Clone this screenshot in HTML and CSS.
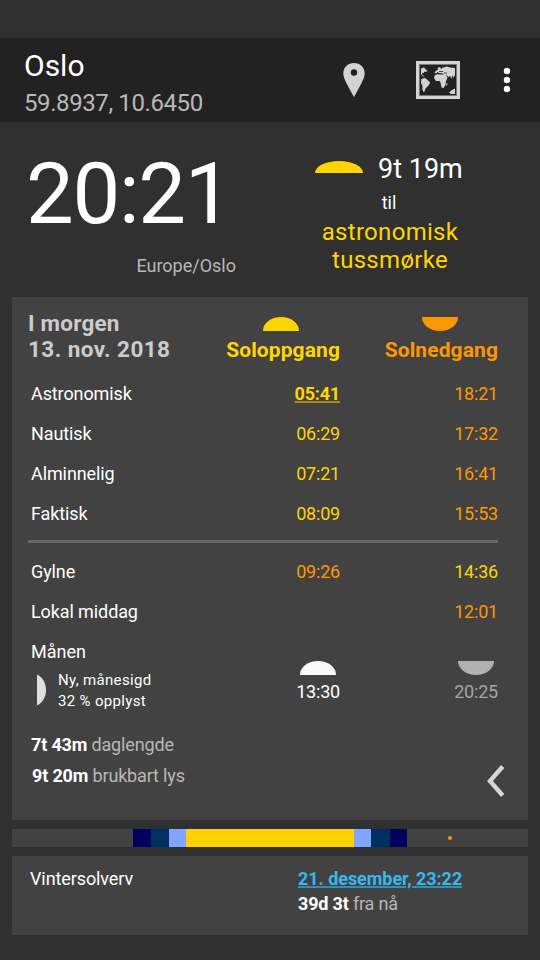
FILE: index.html
```html
<!DOCTYPE html>
<html lang="nb">
<head>
<meta charset="utf-8">
<title>Oslo</title>
<link rel="stylesheet" href="styles.css">
</head>
<body>
<header class="bar">
  <div class="place">
    <div class="city">Oslo</div>
    <div class="coords">59.8937, 10.6450</div>
  </div>
  <svg class="pin" width="22" height="34" viewBox="0 0 22 34"><path fill="#d3d3d3" fill-rule="evenodd" d="M11 0C4.8 0 .3 4.600.3 10.500.3 15 3.800 21 11 34 18.200 21 21.700 15 21.700 10.500 21.700 4.600 17.200 0 11 0ZM11 6.300a3.200 3.200 0 1 1 0 6.400 3.200 3.200 0 0 1 0-6.400Z"/></svg>
  <svg class="map" width="44" height="38" viewBox="0 0 44 38">
    <rect x="1.500" y="1.500" width="41" height="35" fill="none" stroke="#d3d3d3" stroke-width="3"/>
    <rect x="3.500" y="3.500" width="37" height="31" fill="none" stroke="#777" stroke-width="1"/>
    <g fill="#d3d3d3">
      <path d="M5 7.500L6.500 7 8 6.300 9.300 8 11.500 10 10 11 8.500 10.600 7.500 12 6 12.300 6.300 14 8.500 15.500 8 16 5 13.500Z"/>
      <path d="M5.300 18L9 17 11 18.500 14 21.300 13.300 23.500 11.500 25.500 9.500 27.500 8.500 30.500 7.300 31 6.300 28 6.500 25 5 22Z"/>
      <path d="M18.500 12L20 9.500 22 9 21.500 7 24 6 25 8 27 6.500 31 5.500 34 6.500 39 7 39 16 38 14 37.500 17 36 14.500 35.500 18 34 15 32.500 16 31 14.500 29.500 14 31.500 16 31 18 30 20 29.500 24 27.500 27 25.500 26.500 24.500 21.500 23.500 20 20 20 18 17 18.500 14.500 21 13.200 24 13.500 28 13.500 27 12.500 23 12 21.500 11 20 12.600Z"/>
      <path d="M30.500 22.500L31.500 22 31.300 24 30.300 25Z"/>
      <path d="M33 31.500L36 29 39 27.500V33H35Z"/>
    </g>
    <path fill="none" stroke="#222" stroke-width=".8" d="M23 10.500h4M28 12h3"/>
  </svg>
  <svg class="more" width="8" height="26" viewBox="0 0 8 26" fill="#fff"><circle cx="4" cy="4" r="3.200"/><circle cx="4" cy="13" r="3.200"/><circle cx="4" cy="22" r="3.200"/></svg>
</header>

<section class="now">
  <div class="clock">
    <div class="time">20:21</div>
    <div class="zone">Europe/Oslo</div>
  </div>
  <div class="next">
    <div class="countdown">
      <svg width="48" height="12" viewBox="0 0 48 12"><ellipse cx="24" cy="12" rx="24" ry="12" fill="#ffd500"/></svg>
      <span class="remaining">9t 19m</span>
    </div>
    <div class="until">til</div>
    <div class="event">astronomisk<br>tussmørke</div>
  </div>
</section>

<main class="card day">
  <div class="head">
    <div class="date">I morgen<br><span class="day-date">13. nov. 2018</span></div>
    <div class="col rise"><svg width="36" height="14" viewBox="0 0 36 14"><ellipse cx="18" cy="14" rx="18" ry="14" fill="#ffd500"/></svg><span>Soloppgang</span></div>
    <div class="col set"><svg width="36" height="14" viewBox="0 0 36 14"><ellipse cx="18" cy="0" rx="18" ry="14" fill="#ff9800"/></svg><span>Solnedgang</span></div>
  </div>
  <div class="row"><span>Astronomisk</span><b class="yellow current">05:41</b><span class="orange">18:21</span></div>
  <div class="row"><span>Nautisk</span><span class="yellow">06:29</span><span class="orange">17:32</span></div>
  <div class="row"><span>Alminnelig</span><span class="yellow">07:21</span><span class="orange">16:41</span></div>
  <div class="row"><span>Faktisk</span><span class="yellow">08:09</span><span class="orange">15:53</span></div>
  <div class="rule"></div>
  <div class="row"><span>Gylne</span><span class="orange">09:26</span><span class="yellow">14:36</span></div>
  <div class="row"><span>Lokal middag</span><span></span><span class="orange">12:01</span></div>
  <div class="moon">
    <div>
      <div class="moon-name">Månen</div>
      <div class="phase">
        <svg width="9" height="32" viewBox="0 0 9 32"><path fill="#dedede" d="M0 0.500C12 6.500 12 25.500 0 31.500Z"/></svg>
        <div class="phase-text">Ny, månesigd<br>32 % opplyst</div>
      </div>
    </div>
    <div class="moon-time"><svg width="36" height="14" viewBox="0 0 36 14"><ellipse cx="18" cy="14" rx="18" ry="14" fill="#fafafa"/></svg><span>13:30</span></div>
    <div class="moon-time dim"><svg width="36" height="14" viewBox="0 0 36 14"><ellipse cx="18" cy="0" rx="18" ry="14" fill="#b0b0b0"/></svg><span>20:25</span></div>
  </div>
  <div class="foot">
    <div class="lengths">
      <div><b>7t 43m</b> daglengde</div>
      <div class="usable"><b>9t 20m</b> brukbart lys</div>
    </div>
    <svg class="back" width="18" height="32" viewBox="0 0 18 32"><path fill="none" stroke="#d6d6d6" stroke-width="4.400" d="M15.700 1.500L3 16 15.700 30.500"/></svg>
  </div>
</main>

<div class="band">
  <i class="gap"></i><i class="astro"></i><i class="naut"></i><i class="civil"></i><i class="light"></i><i class="civil"></i><i class="naut eve"></i><i class="astro eve"></i><i class="dot"></i>
</div>

<section class="card solstice">
  <div class="name">Vintersolverv</div>
  <div class="when">
    <div class="link">21. desember, 23:22</div>
    <div class="away"><b>39d 3t</b> fra nå</div>
  </div>
</section>
</body>
</html>
```

FILE: styles.css
```css
* { box-sizing: border-box; }
body {
  margin: 0;
  padding-top: 38px;
  height: 960px;
  overflow: hidden;
  background: #303030;
  color: #fff;
  font-family: Roboto, "Liberation Sans", sans-serif;
  font-size: 18px;
}
svg { display: block; flex: none; }

.bar { display: flex; align-items: flex-start; height: 84px; padding-left: 24px; background: #222; }
.place { width: 319px; padding-top: 10px; }
.city { font-size: 30px; line-height: 36px; }
.coords { font-size: 24px; line-height: 38px; letter-spacing: -.4px; color: #b8b8b8; }
.pin { margin-top: 25px; }
.map { margin: 23px 0 0 51px; }
.more { margin: 29px 0 0 43px; }

.now { display: flex; height: 175px; }
.clock { width: 236px; padding-top: 22px; text-align: right; }
.time { height: 100px; padding-left: 26px; font-size: 85px; line-height: 100px; letter-spacing: -1.300px; text-align: left; }
.zone { margin-top: 11px; line-height: 22px; color: #b8b8b8; }
.next { width: 152px; margin-left: 79px; }
.countdown { display: flex; align-items: flex-start; padding-top: 29px; height: 68px; }
.countdown svg { margin-top: 10px; }
.remaining { margin: 1px 0 0 15px; font-size: 27px; line-height: 34px; white-space: nowrap; }
.until { line-height: 22px; margin-top: 2px; text-align: center; padding-right: 4px; }
.event { font-size: 24px; line-height: 28px; margin-top: 4px; padding-right: 2px; letter-spacing: .3px; color: #ffd500; text-align: center; }

.card { margin: 0 12px; background: #424242; }
.day { height: 523px; padding: 0 30px 0 16px; }
.head, .row, .moon { display: grid; grid-template-columns: 154px 158px 158px; }
.head { height: 77px; padding-top: 13px; font-weight: 700; }
.date { font-size: 22.500px; line-height: 26px; letter-spacing: .2px; color: #ccc; white-space: nowrap; }
.day-date { letter-spacing: .45px; }
.col { display: flex; flex-direction: column; align-items: flex-end; font-size: 21px; line-height: 26px; letter-spacing: .1px; padding-top: 7px; }
.col svg { margin-right: 41px; margin-bottom: 6px; }
.rise, .yellow { color: #ffd500; }
.set, .orange { color: #ff9800; }
.col.set svg { margin-right: 40px; }
.row { line-height: 40px; letter-spacing: -.1px; }
.row > :first-child { padding-left: 3px; white-space: nowrap; }
.row > :not(:first-child) { text-align: right; letter-spacing: -.2px; }
.current { text-decoration: underline; text-decoration-thickness: 2px; text-decoration-color: #a38e16; text-underline-offset: 1px; }
.rule { height: 3px; margin: 6px 0 9px; background: #686868; }
.moon { height: 87px; }
.moon-name { padding-left: 3px; line-height: 40px; }
.phase { display: flex; padding-left: 9px; }
.phase svg { margin-top: 2px; }
.phase-text { margin: -2px 0 0 12px; font-size: 15px; line-height: 21px; letter-spacing: .33px; white-space: nowrap; }
.moon-time { display: flex; flex-direction: column; align-items: flex-end; padding-top: 29px; line-height: 22px; letter-spacing: -.2px; }
.moon-time svg { margin: 0 4px 6px 0; }
.dim { color: #a6a6a6; }
.foot { display: flex; justify-content: space-between; height: 69px; margin-top: 10px; padding-left: 3px; }
.lengths { line-height: 31px; letter-spacing: -.16px; color: #b8b8b8; }
.lengths b { color: #fff; }
.usable { padding-left: 1px; }
.back { margin: 36px -7px 0 0; }

.band { display: flex; height: 18px; margin: 9px 12px; background: #424242; }
.gap { width: 121px; }
.astro { width: 18px; background: #000060; }
.naut { width: 18px; background: #003060; }
.civil { width: 17px; background: #80a4ff; }
.light { width: 168px; background: #ffd000; }
.naut.eve { width: 19px; }
.astro.eve { width: 17px; }
.dot { width: 4px; height: 4px; margin: 7px 0 0 41px; border-radius: 50%; background: #ff9800; }

.solstice { display: flex; height: 79px; padding: 10px 0 0 18px; line-height: 25px; }
.name { width: 268px; letter-spacing: -.1px; }
.link { font-weight: 700; letter-spacing: -.05px; color: #36b8f2; text-decoration: underline; text-decoration-thickness: 2px; text-underline-offset: 1px; text-decoration-color: #3390b0; }
.away { letter-spacing: -.18px; color: #b8b8b8; }
.away b { color: #fff; }
```
